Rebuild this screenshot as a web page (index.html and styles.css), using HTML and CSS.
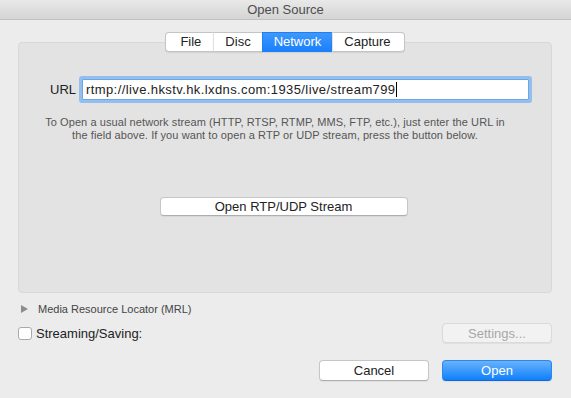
FILE: index.html
```html
<!DOCTYPE html>
<html lang="en">
<head>
    <meta charset="UTF-8">
    <title>Open Source</title>
    <link rel="stylesheet" href="styles.css">
</head>
<body>
    <div class="titlebar">Open Source</div>

    <div class="content">
        <div class="tabs">
            <div class="tab">File</div>
            <div class="tab">Disc</div>
            <div class="tab active">Network</div>
            <div class="tab">Capture</div>
        </div>

        <div class="panel">
            <div class="url-row">
                <label class="url-label" for="url">URL</label>
                <div class="url-field" id="url">rtmp://live.hkstv.hk.lxdns.com:1935/live/stream799<span class="caret"></span></div>
            </div>
            <p class="help">To Open a usual network stream (HTTP, RTSP, RTMP, MMS, FTP, etc.), just enter the URL in<br>the field above. If you want to open a RTP or UDP stream, press the button below.</p>
            <div class="center">
                <button class="btn btn-wide">Open RTP/UDP Stream</button>
            </div>
        </div>

        <div class="mrl">
            <span class="triangle"></span>
            <span>Media Resource Locator (MRL)</span>
        </div>

        <div class="stream-row">
            <label class="check">
                <span class="checkbox"></span>
                Streaming/Saving:
            </label>
            <button class="btn btn-disabled">Settings...</button>
        </div>

        <div class="actions">
            <button class="btn">Cancel</button>
            <button class="btn btn-primary">Open</button>
        </div>
    </div>
</body>
</html>
```

FILE: styles.css
```css
* {
    box-sizing: border-box;
    margin: 0;
    padding: 0;
}

body {
    font-family: 'Liberation Sans', Arial, sans-serif;
    font-size: 13px;
    color: #222;
    background: #ececec;
    width: 571px;
    height: 398px;
    overflow: hidden;
}

.titlebar {
    height: 20px;
    line-height: 19px;
    text-align: center;
    color: #4d4d4d;
    background: linear-gradient(#e9e9e9, #d4d4d4);
    border-bottom: 1px solid #c2c2c2;
}

.content {
    padding: 0 19px 0 18px;
}

.tabs {
    display: flex;
    justify-content: center;
    margin-top: 12px;
    margin-bottom: -10px;
    position: relative;
    z-index: 1;
}

.tab {
    height: 20px;
    line-height: 18px;
    padding: 0 11px;
    background: #fff;
    border: 1px solid #c4c4c4;
    border-left: 1px solid #e0e0e0;
    border-right: none;
    box-shadow: 0 1px 1px rgba(0, 0, 0, 0.08);
}

.tab:first-child {
    border-left: 1px solid #c4c4c4;
    border-radius: 4px 0 0 4px;
    padding: 0 12px 0 14px;
}

.tab:last-child {
    border-right: 1px solid #c4c4c4;
    border-radius: 0 4px 4px 0;
    padding: 0 13px 0 11px;
}

.tab.active {
    color: #fff;
    background: linear-gradient(#3f98fd, #1a80fb);
    border-color: #1d7ff5;
}

.panel {
    height: 251px;
    background: #e3e3e3;
    border: 1px solid #d8d8d8;
    border-radius: 4px;
    padding: 36px 22px 0 31px;
}

.url-row {
    display: flex;
    align-items: center;
    gap: 6px;
}

.url-label {
    font-size: 13px;
    color: #222;
}

.url-field {
    flex: 1;
    height: 21px;
    line-height: 19px;
    padding: 0 3px;
    background: #fff;
    border: 1px solid #6ea6e4;
    box-shadow: 0 0 0 3px #93bfee;
    border-radius: 1px;
    white-space: nowrap;
    letter-spacing: 0.4px;
}

.caret {
    display: inline-block;
    width: 1px;
    height: 15px;
    background: #000;
    vertical-align: -3px;
}

.help {
    margin: 16px -5px 0 -34px;
    font-size: 11px;
    line-height: 13px;
    letter-spacing: 0.08px;
    color: #555;
    text-align: center;
}

.center {
    display: flex;
    justify-content: center;
    margin: 55px 0 0 -12px;
}

.btn {
    font-family: inherit;
    font-size: 13px;
    color: #222;
    height: 20px;
    width: 110px;
    background: #fff;
    border: 1px solid #c6c6c6;
    border-bottom-color: #aeaeae;
    border-radius: 4px;
    box-shadow: 0 1px 1px rgba(0, 0, 0, 0.06);
}

.btn-wide {
    width: 248px;
    height: 19px;
}

.btn-disabled {
    color: #a8a8a8;
    background: #f2f2f2;
    border-color: #dadada;
}

.btn-primary {
    color: #fff;
    background: linear-gradient(#69b2fb, #0e80fd);
    border-color: #2b86f0;
    border-bottom-color: #1766d9;
}

.mrl {
    display: flex;
    align-items: center;
    gap: 10px;
    margin-top: 9px;
    height: 14px;
    padding-left: 3px;
    font-size: 11px;
    color: #444;
}

.triangle {
    width: 0;
    height: 0;
    border-top: 4px solid transparent;
    border-bottom: 4px solid transparent;
    border-left: 7px solid #8d8d8d;
}

.stream-row {
    display: flex;
    justify-content: space-between;
    align-items: center;
    margin-top: 7px;
}

.check {
    display: flex;
    align-items: center;
    gap: 4px;
}

.checkbox {
    width: 14px;
    height: 13px;
    background: #fff;
    border: 1px solid #aaa;
    border-radius: 3px;
}

.actions {
    display: flex;
    justify-content: flex-end;
    gap: 13px;
    margin-top: 17px;
}

.actions .btn {
    height: 21px;
}
```
